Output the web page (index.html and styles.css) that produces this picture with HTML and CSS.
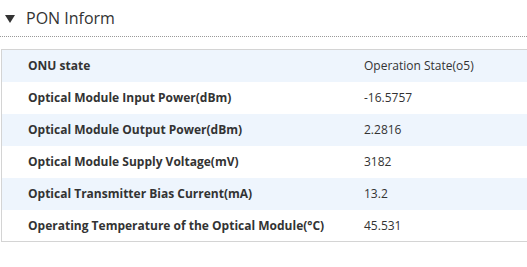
FILE: index.html
```html
<!DOCTYPE html>
<html>
<head>
<meta charset="utf-8">
<link rel="stylesheet" href="styles.css">
</head>
<body>
<div class="section">
  <div class="head">
    <span class="tri"></span>
    <span class="title">PON Inform</span>
  </div>
  <div class="rule"></div>
  <div class="wrap">
  <table class="info">
    <tr class="odd"><td class="lbl">ONU state</td><td class="val">Operation State(o5)</td></tr>
    <tr><td class="lbl">Optical Module Input Power(dBm)</td><td class="val">-16.5757</td></tr>
    <tr class="odd"><td class="lbl">Optical Module Output Power(dBm)</td><td class="val">2.2816</td></tr>
    <tr><td class="lbl">Optical Module Supply Voltage(mV)</td><td class="val">3182</td></tr>
    <tr class="odd"><td class="lbl">Optical Transmitter Bias Current(mA)</td><td class="val">13.2</td></tr>
    <tr><td class="lbl">Operating Temperature of the Optical Module(&deg;C)</td><td class="val">45.531</td></tr>
  </table>
  </div>
</div>
</body>
</html>
```
FILE: styles.css
```css
html, body {
  margin: 0;
  padding: 0;
  background: #ffffff;
}
body {
  font-family: "Open Sans", "Noto Sans", sans-serif;
  color: #333333;
  width: 527px;
  overflow: hidden;
}
.section {
  padding-top: 6px;
}
.head {
  display: flex;
  align-items: center;
  height: 24px;
  padding-left: 5px;
}
.tri {
  width: 0;
  height: 0;
  border-left: 5px solid transparent;
  border-right: 5px solid transparent;
  border-top: 8px solid #333;
  margin-right: 11px;
  margin-top: 1px;
}
.title {
  font-size: 16px;
  color: #333;
}
.rule {
  margin-top: 6px;
  border-top: 1px dotted #999999;
  width: 527px;
}
.wrap {
  overflow: hidden;
  margin-top: 12px;
  padding-left: 1px;
}
.info {
  width: calc(100% + 20px);
  border-collapse: collapse;
  border: 1px solid #d4d4d4;
  border-right: none;
}
.info tr {
  height: 32px;
}
.info tr.odd {
  background: #eef5fd;
}
.info td {
  padding: 0;
  font-size: 12px;
  vertical-align: middle;
}
.lbl {
  font-weight: bold;
  padding-left: 26px !important;
  width: 336px;
}
.val {
  color: #333;
}
```
